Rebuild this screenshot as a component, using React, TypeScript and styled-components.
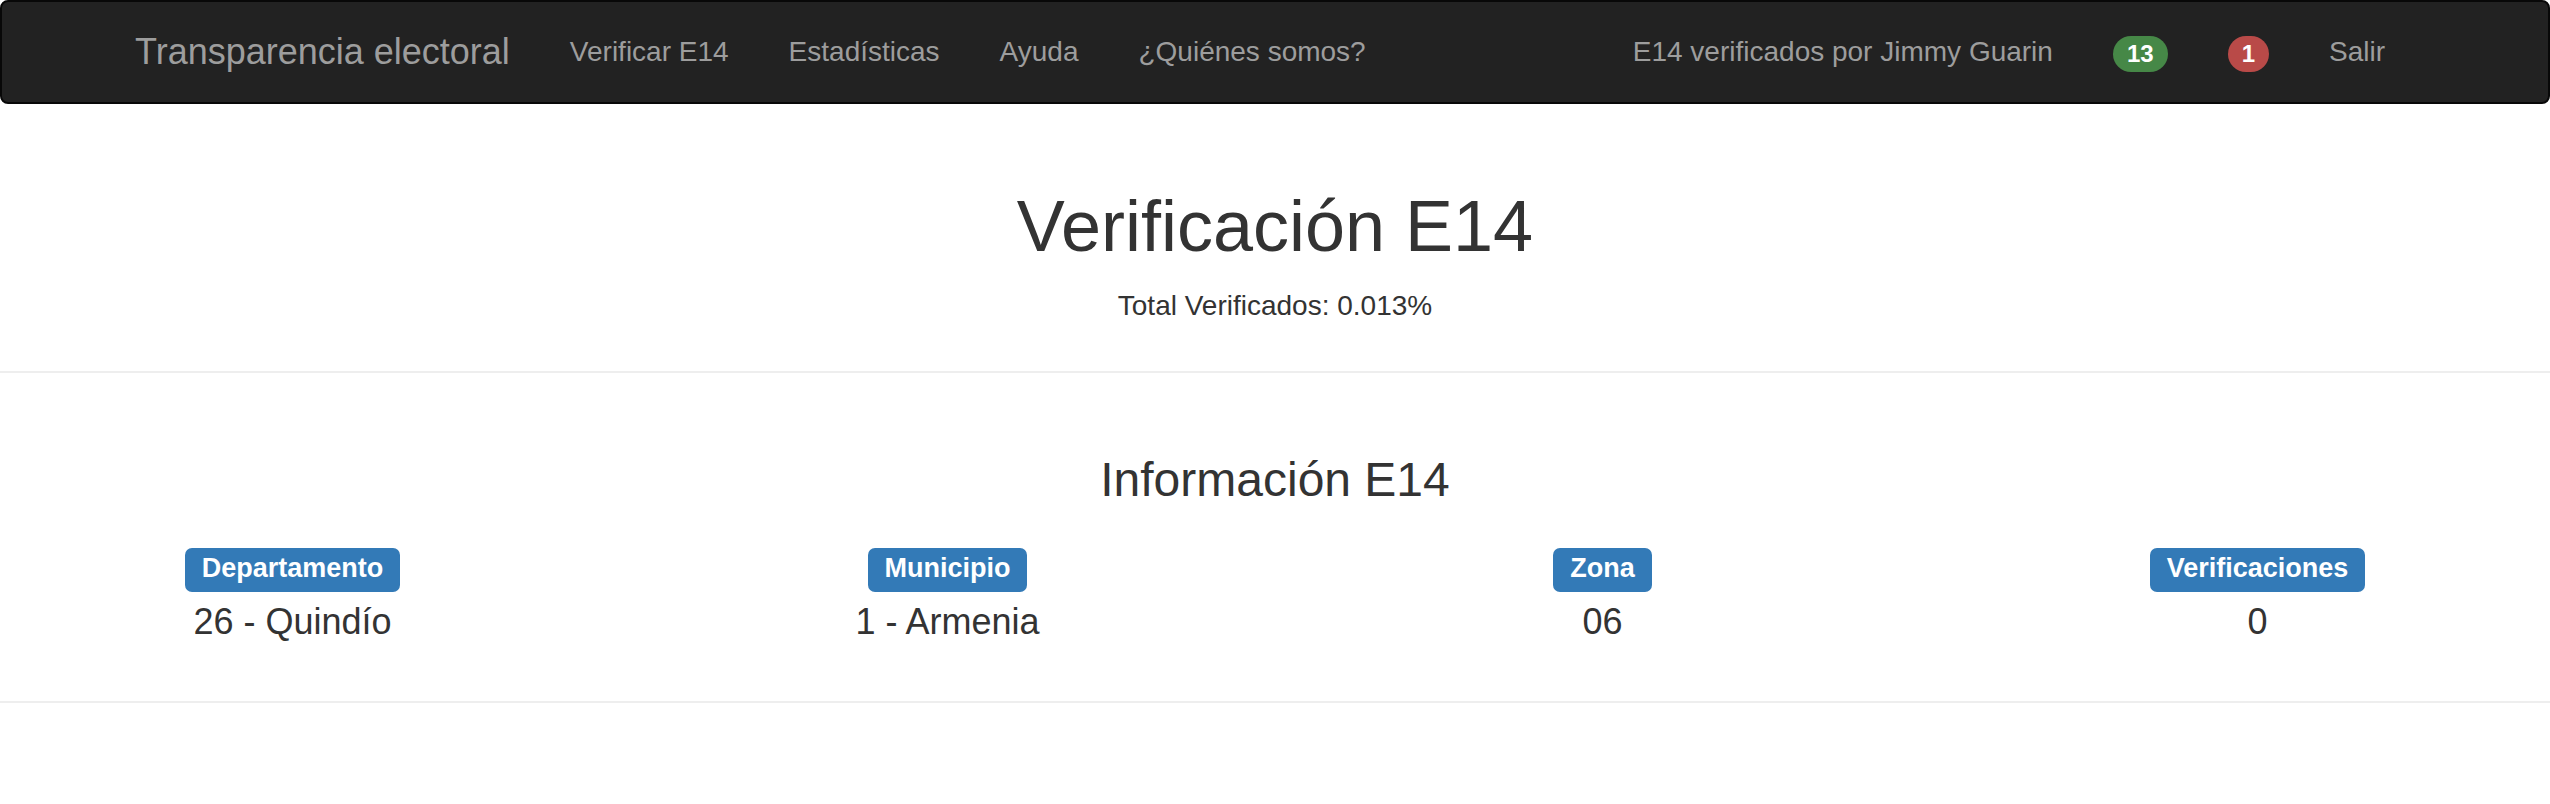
import React from "react";
import styled, { createGlobalStyle } from "styled-components";

const GlobalStyle = createGlobalStyle`
  html, body {
    margin: 0;
    padding: 0;
    background: #ffffff;
  }
  body {
    font-family: "Liberation Sans", Arial, Helvetica, sans-serif;
    color: #333333;
  }
  * { box-sizing: border-box; }
`;

const Navbar = styled.nav`
  background: #222222;
  border: 2px solid #080808;
  border-radius: 8px;
  height: 104px;
`;

const NavContainer = styled.div`
  width: 2340px;
  margin: 0 auto;
  padding: 0 30px;
  display: flex;
  align-items: flex-start;
  height: 100%;
`;

const Brand = styled.a`
  display: block;
  margin-left: -30px;
  padding: 30px;
  font-size: 36px;
  line-height: 40px;
  color: #9d9d9d;
  text-decoration: none;
  white-space: nowrap;
`;

const NavList = styled.ul<{ $right?: boolean }>`
  display: flex;
  list-style: none;
  margin: 0;
  padding: 0;
  margin-left: ${(p) => (p.$right ? "auto" : "0")};
`;

const NavItem = styled.li`
  display: block;
`;

const NavLink = styled.a`
  display: block;
  padding: 30px;
  font-size: 28px;
  line-height: 40px;
  color: #9d9d9d;
  text-decoration: none;
  white-space: nowrap;
`;

const Badge = styled.span<{ $tone: "success" | "danger" }>`
  display: inline-block;
  min-width: 20px;
  padding: 6px 14px;
  font-size: 24px;
  font-weight: bold;
  line-height: 1;
  color: #ffffff;
  text-align: center;
  white-space: nowrap;
  vertical-align: middle;
  border-radius: 20px;
  background: ${(p) => (p.$tone === "success" ? "#468847" : "#b94a48")};
`;

const Hero = styled.header`
  padding: 83px 0 45px;
  text-align: center;
`;

const Title = styled.h1`
  margin: 0 0 20px;
  font-size: 72px;
  line-height: 79px;
  font-weight: normal;
  color: #333333;
`;

const Subtitle = styled.p`
  margin: 0;
  font-size: 28px;
  line-height: 40px;
  color: #333333;
`;

const Divider = styled.hr`
  margin: 0;
  border: 0;
  border-top: 2px solid #eeeeee;
  height: 0;
`;

const InfoSection = styled.section`
  padding: 80px 0 59px;
`;

const SectionTitle = styled.h3`
  margin: 0 0 42px;
  font-size: 48px;
  line-height: 53px;
  font-weight: normal;
  text-align: center;
  color: #333333;
`;

const InfoGrid = styled.div`
  display: grid;
  grid-template-columns: repeat(4, 1fr);
  column-gap: 70px;
`;

const InfoCell = styled.div`
  display: flex;
  flex-direction: column;
  align-items: center;
`;

const Label = styled.span`
  display: inline-block;
  padding: 7px 17px 10px;
  font-size: 27px;
  font-weight: bold;
  line-height: 1;
  color: #ffffff;
  background: #337ab7;
  border-radius: 7px;
  white-space: nowrap;
`;

const Value = styled.div`
  margin-top: 10px;
  font-size: 36px;
  line-height: 40px;
  color: #333333;
`;

const leftLinks = ["Verificar E14", "Estadísticas", "Ayuda", "¿Quiénes somos?"];

const info = [
  { label: "Departamento", value: "26 - Quindío" },
  { label: "Municipio", value: "1 - Armenia" },
  { label: "Zona", value: "06" },
  { label: "Verificaciones", value: "0" },
];

export default function App() {
  return (
    <>
      <GlobalStyle />
      <Navbar>
        <NavContainer>
          <Brand href="#">Transparencia electoral</Brand>
          <NavList>
            {leftLinks.map((l) => (
              <NavItem key={l}>
                <NavLink href="#">{l}</NavLink>
              </NavItem>
            ))}
          </NavList>
          <NavList $right>
            <NavItem>
              <NavLink href="#">E14 verificados por Jimmy Guarin</NavLink>
            </NavItem>
            <NavItem>
              <NavLink href="#">
                <Badge $tone="success">13</Badge>
              </NavLink>
            </NavItem>
            <NavItem>
              <NavLink href="#">
                <Badge $tone="danger">1</Badge>
              </NavLink>
            </NavItem>
            <NavItem>
              <NavLink href="#">Salir</NavLink>
            </NavItem>
          </NavList>
        </NavContainer>
      </Navbar>
      <Hero>
        <Title>Verificación E14</Title>
        <Subtitle>Total Verificados: 0.013%</Subtitle>
      </Hero>
      <Divider />
      <InfoSection>
        <SectionTitle>Información E14</SectionTitle>
        <InfoGrid>
          {info.map((i) => (
            <InfoCell key={i.label}>
              <Label>{i.label}</Label>
              <Value>{i.value}</Value>
            </InfoCell>
          ))}
        </InfoGrid>
      </InfoSection>
      <Divider />
    </>
  );
}
